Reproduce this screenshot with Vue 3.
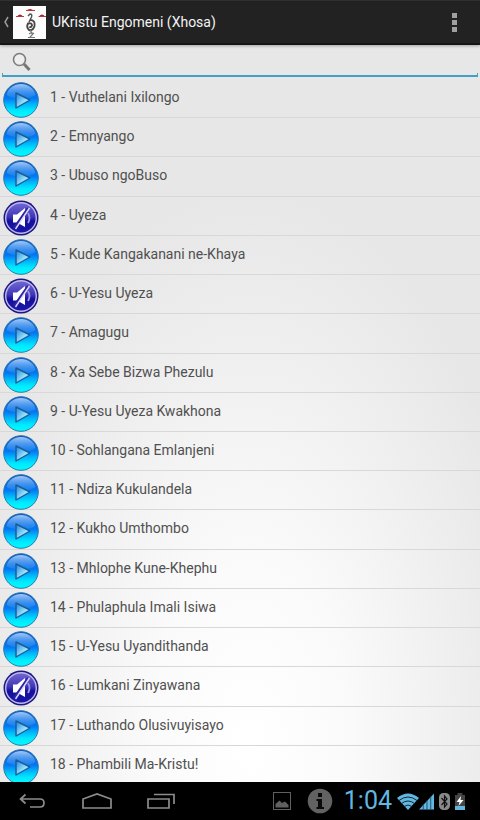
<script setup>
import { ref, computed } from "vue";

const query = ref("");

const songs = [
    { id: 1, title: "Vuthelani Ixilongo" },
    { id: 2, title: "Emnyango" },
    { id: 3, title: "Ubuso ngoBuso" },
    { id: 4, title: "Uyeza", muted: true },
    { id: 5, title: "Kude Kangakanani ne-Khaya" },
    { id: 6, title: "U-Yesu Uyeza", muted: true },
    { id: 7, title: "Amagugu" },
    { id: 8, title: "Xa Sebe Bizwa Phezulu" },
    { id: 9, title: "U-Yesu Uyeza Kwakhona" },
    { id: 10, title: "Sohlangana Emlanjeni" },
    { id: 11, title: "Ndiza Kukulandela" },
    { id: 12, title: "Kukho Umthombo" },
    { id: 13, title: "Mhlophe Kune-Khephu" },
    { id: 14, title: "Phulaphula Imali Isiwa" },
    { id: 15, title: "U-Yesu Uyandithanda" },
    { id: 16, title: "Lumkani Zinyawana", muted: true },
    { id: 17, title: "Luthando Olusivuyisayo" },
    { id: 18, title: "Phambili Ma-Kristu!" },
];

const visibleSongs = computed(() => {
    const term = query.value.trim().toLowerCase();
    return songs.filter((song) => `${song.id} - ${song.title}`.toLowerCase().includes(term));
});
</script>

<template>
    <div class="screen">
        <!-- shared gradients and symbols for the song buttons -->
        <svg class="defs" aria-hidden="true">
            <defs>
                <linearGradient id="playFill" x1="0" y1="0" x2="0" y2="1">
                    <stop offset="0" stop-color="#1450c0" />
                    <stop offset="0.45" stop-color="#0478f4" />
                    <stop offset="0.62" stop-color="#00b4fa" />
                    <stop offset="0.8" stop-color="#00e8ff" />
                    <stop offset="1" stop-color="#00fcff" />
                </linearGradient>
                <linearGradient id="gloss" x1="0" y1="0" x2="0" y2="1">
                    <stop offset="0" stop-color="#a8d0ff" stop-opacity="0.95" />
                    <stop offset="1" stop-color="#4aa8f8" stop-opacity="0.2" />
                </linearGradient>
                <linearGradient id="arrowFill" x1="0" y1="0" x2="1" y2="1">
                    <stop offset="0" stop-color="#2080dc" />
                    <stop offset="0.6" stop-color="#9ae4fc" />
                    <stop offset="1" stop-color="#58d0f0" />
                </linearGradient>
                <linearGradient id="muteFill" x1="0" y1="0" x2="0" y2="1">
                    <stop offset="0" stop-color="#7468d4" />
                    <stop offset="0.45" stop-color="#4038b8" />
                    <stop offset="0.6" stop-color="#14109c" />
                    <stop offset="1" stop-color="#1c18a8" />
                </linearGradient>
            </defs>
            <symbol id="play" viewBox="0 0 36 36">
                <circle cx="18" cy="18" r="17.3" fill="url(#playFill)" stroke="#2a78a8" stroke-width="1" />
                <path d="M3.500 13C5 6 11 2 18 2S31 6 32.500 13C27 17.500 9 17.500 3.500 13Z" fill="url(#gloss)" />
                <path d="M13 11V26L27 18Z" fill="url(#arrowFill)" stroke="#1a5c98" stroke-width="1.400" stroke-linejoin="round" />
            </symbol>
            <symbol id="mute" viewBox="0 0 36 36">
                <circle cx="18" cy="18" r="17.500" fill="#1c1880" />
                <circle cx="18" cy="18" r="15.300" fill="url(#muteFill)" stroke="#c0b8ec" stroke-width="1.400" />
                <path d="M10 14.500H14L22 8V27L14 22.500H10Z" fill="#fff" />
                <path d="M25 13Q28 18 25 23" fill="none" stroke="#9c94e0" stroke-width="1.800" />
                <path d="M25 8L11 28" stroke="#2c24a4" stroke-width="2.200" />
                <path d="M26.500 8L12.500 29" stroke="#dcd8f8" stroke-width="1.400" />
            </symbol>
        </svg>

        <header class="action-bar">
            <button class="up" type="button" aria-label="Back">
                <svg width="6" height="12" viewBox="0 0 6 12">
                    <path d="M5 1L2 6L5 11" fill="none" stroke="#9a9a9a" stroke-width="1.500" />
                </svg>
                <svg class="logo" width="33" height="33" viewBox="0 0 33 33">
                    <rect width="33" height="33" fill="#fdfdfd" />
                    <path d="M13 5Q17 1 21 5ZM4 10.500Q7 6.500 10 10.500ZM26 10.500Q29 6.500 32 10.500Z" fill="#b02026" />
                    <path d="M13 4.500H22M3 10.500H11M25.500 10.500H33" stroke="#b83a40" stroke-width="1" />
                    <path
                        d="M15 10L17 8Q19.500 8 18.500 11L16 16"
                        fill="none"
                        stroke="#555"
                        stroke-width="1.500"
                    />
                    <path
                        d="M17 14Q22.500 14 21.500 20Q20 25 16 24Q13 21 15 17.500Q19 16.500 19 19.500Q18 22 16.500 20.500"
                        fill="none"
                        stroke="#484848"
                        stroke-width="1.900"
                    />
                    <path d="M17.500 24L19 28M16 28Q19 25.500 21 28M15 31.500H22M17 31L20 28" fill="none" stroke="#777" stroke-width="1.200" />
                </svg>
            </button>
            <h1>UKristu Engomeni (Xhosa)</h1>
            <button class="overflow" type="button" aria-label="More options">
                <svg width="5" height="19" viewBox="0 0 5 19">
                    <path d="M0 0H5V5H0ZM0 7H5V12H0ZM0 14H5V19H0Z" fill="#a0a0a0" />
                </svg>
            </button>
        </header>

        <main>
            <label class="search">
                <svg width="20" height="20" viewBox="0 0 20 20">
                    <circle cx="7.500" cy="7.500" r="6" fill="#eeeeee" stroke="#7c7c7c" stroke-width="1.600" />
                    <path d="M12 12L17.500 18" stroke="#777" stroke-width="3" />
                </svg>
                <input v-model="query" type="search" aria-label="Search songs" />
            </label>

            <ul class="songs">
                <li v-for="song in visibleSongs" :key="song.id">
                    <button type="button">
                        <svg width="36" height="36" aria-hidden="true">
                            <use :href="song.muted ? '#mute' : '#play'" />
                        </svg>
                        <span>{{ song.id }} - {{ song.title }}</span>
                    </button>
                </li>
            </ul>
        </main>

        <footer class="system-bar">
            <nav>
                <button type="button" aria-label="Back">
                    <svg width="28" height="16" viewBox="0 0 28 16">
                        <path d="M6.500 1.500L1.500 6L6.500 10.500M2 6H21Q25 6 25 10T21 14H11" fill="none" stroke="#8c8c8c" stroke-width="1.700" />
                    </svg>
                </button>
                <button type="button" aria-label="Home">
                    <svg width="30" height="16" viewBox="0 0 30 16">
                        <path d="M1 15V6L15 1L29 6V15Z" fill="none" stroke="#8c8c8c" stroke-width="1.700" />
                    </svg>
                </button>
                <button type="button" aria-label="Recent apps">
                    <svg width="28" height="16" viewBox="0 0 28 16">
                        <path d="M1 6H22V15H1ZM7 1.500H27V11" fill="none" stroke="#8c8c8c" stroke-width="1.700" />
                    </svg>
                </button>
            </nav>
            <div class="status">
                <svg class="picture" width="18" height="18" viewBox="0 0 18 18">
                    <rect x="0.500" y="0.500" width="17" height="17" fill="none" stroke="#606060" />
                    <path d="M2.500 15.500V12L6.500 8.500L9 11L12 9.500L15.500 13V15.500Z" fill="#606060" />
                </svg>
                <svg class="info" width="26" height="26" viewBox="0 0 26 26">
                    <circle cx="13" cy="13" r="12.300" fill="#626262" />
                    <path d="M11 5H15V9H11ZM9.500 11H15V19H17V21H9.500V19H11V13H9.500Z" fill="#0a0a0a" />
                </svg>
                <time>1:04</time>
                <svg class="wifi" width="22" height="17" viewBox="0 0 22 17">
                    <path d="M0 5Q11 -4 22 5L11 17Z" fill="#62b6e0" />
                    <path d="M2 7.500Q11 0.500 20 7.500M4.500 10.500Q11 5.500 17.500 10.500M7 13.500Q11 10.500 15 13.500" fill="none" stroke="#0b2836" stroke-width="1" />
                </svg>
                <svg class="signal" width="15" height="17" viewBox="0 0 16 17">
                    <path d="M0 17L16 0V17Z" fill="#62b6e0" />
                    <path d="M4.500 11V17M8.500 7V17M12.500 3V17" stroke="#14465e" stroke-width="0.900" />
                </svg>
                <svg class="bluetooth" width="11" height="17" viewBox="0 0 11 17">
                    <rect width="11" height="17" rx="4.500" fill="#8a8a8a" />
                    <path d="M2.500 5L8 11L5.500 14V3L8 6L2.500 12" fill="none" stroke="#111" stroke-width="1.200" />
                </svg>
                <svg class="battery" width="12" height="17" viewBox="0 0 12 17">
                    <path d="M3.500 0H8.500V2H11V17H1V2H3.500Z" fill="#454545" />
                    <path d="M1 13H11V17H1Z" fill="#62b6e0" />
                    <path d="M7 3L2.500 9H5.500L4.500 13L9.500 7H6.500Z" fill="#fff" />
                </svg>
            </div>
        </footer>
    </div>
</template>

<style>
body {
    margin: 0;
}
</style>

<style scoped>
.screen {
    display: flex;
    flex-direction: column;
    height: 100vh;
    overflow: hidden;
    font-family: Roboto, "Noto Sans", sans-serif;
    background: #e6e6e6;
}

.defs {
    position: absolute;
    width: 0;
    height: 0;
}

button {
    border: 0;
    padding: 0;
    background: none;
    font: inherit;
    color: inherit;
    cursor: pointer;
}

svg {
    display: block;
    flex: none;
}

.action-bar {
    display: flex;
    align-items: center;
    box-sizing: border-box;
    height: 45px;
    flex: none;
    padding-right: 23px;
    border-top: 1px solid #303030;
    border-bottom: 2px solid #151515;
    background: #222;
    color: #f3f3f3;
    position: relative;
    box-shadow: 0 1px 3px rgba(0, 0, 0, 0.3);
}

.up {
    display: flex;
    align-items: center;
    gap: 4px;
    padding-left: 3px;
}

h1 {
    flex: 1;
    margin: 0 0 0 6px;
    font-size: 14px;
    font-weight: 400;
    line-height: 20px;
}

main {
    flex: 1;
    min-height: 0;
    display: flex;
    flex-direction: column;
    background: radial-gradient(ellipse 60% 75% at 52% 95%, #fff 0, #fafafa 35%, #eee 75%, #e7e7e7 100%);
}

.search {
    display: flex;
    align-items: center;
    height: 27px;
    flex: none;
    margin: 0 2px 2px;
    padding: 3px 9px 0;
    border: solid #3fa0c8;
    border-width: 0 1px 2px;
    border-image: linear-gradient(to top, #3fa0c8 4px, transparent 4px) 0 1 2;
}

.search input {
    flex: 1;
    min-width: 0;
    margin-left: 8px;
    border: 0;
    outline: 0;
    background: none;
    font: inherit;
    font-size: 14px;
}

/* the last row runs a little way under the system bar */
.songs {
    flex: 1;
    display: grid;
    grid-auto-rows: minmax(39px, 1fr);
    margin: 0 0 -3px;
    padding: 0;
    list-style: none;
}

.songs li {
    display: flex;
    border-bottom: 1px solid #d8d8d8;
}

.songs button {
    display: flex;
    flex: 1;
    align-items: flex-start;
    gap: 11px;
    padding: 3px 3px 0;
    margin-bottom: -1px;
    color: #505050;
    font-size: 14px;
    line-height: 30px;
    text-align: left;
}

.system-bar {
    display: flex;
    flex: none;
    align-items: center;
    justify-content: space-between;
    position: relative;
    height: 38px;
    padding: 0 14px 0 19px;
    background: #000;
}

nav,
.status {
    display: flex;
    align-items: center;
}

nav {
    gap: 35px;
}

.info {
    margin-left: 16px;
}

time {
    margin: 0 5px 0 11px;
    color: #62b6e0;
    font-size: 25px;
    line-height: 38px;
}

.bluetooth {
    margin: 0 4px 0 5px;
}
</style>
